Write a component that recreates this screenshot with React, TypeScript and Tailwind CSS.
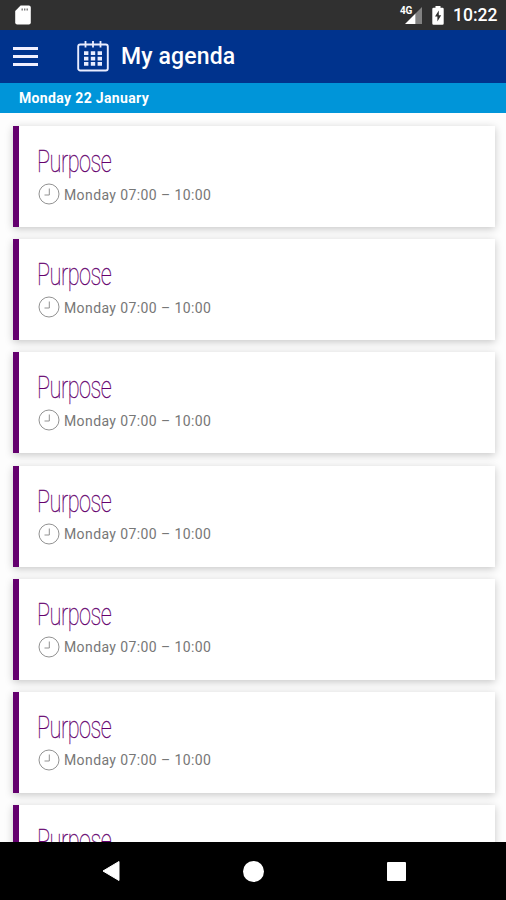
import React from 'react';

interface AgendaItem {
  id: number;
  title: string;
  time: string;
}

const agendaItems: AgendaItem[] = Array.from({ length: 7 }, (_, i) => ({
  id: i + 1,
  title: 'Purpose',
  time: 'Monday 07:00 – 10:00',
}));

const StatusBar = () => (
  <div className="flex h-[30px] shrink-0 items-center bg-[#303030] pl-[15px] pr-[9px] text-white">
    {/* SD card */}
    <svg width="16" height="20" viewBox="0 0 16 20" fill="currentColor">
      <path d="M5.6 0.5H13.8Q15.8 0.5 15.8 2.5V17.5Q15.8 19.5 13.8 19.5H2.2Q0.2 19.5 0.2 17.5V6Z" />
      <path d="M6.5 3.4h1.4v2.2H6.5zM9 3.4h1.4v2.2H9zM11.5 3.4h1.4v2.2h-1.4z" fill="#777" />
    </svg>
    <div className="ml-auto flex items-center">
      <div className="relative h-[20px] w-[22px]">
        <span className="absolute left-0 top-[1px] text-[10px] font-bold leading-[10px] tracking-[-0.3px]">4G</span>
        <svg className="absolute left-[5px] top-[2px]" width="17" height="17" viewBox="0 0 17 17">
          <path d="M17 0V17H10.5V6.5Z" fill="#828282" />
          <path d="M10.5 6.5V17H0Z" fill="#fff" />
        </svg>
      </div>
      <svg className="ml-[10px]" width="12" height="19" viewBox="0 0 12 19">
        <path d="M3.5 0h5v1.8h2Q11.7 1.8 11.7 3v14.5Q11.7 18.7 10.5 18.7h-9Q0.3 18.7 0.3 17.5V3Q0.3 1.8 1.5 1.8h2z" fill="#fff" />
        <path d="M6.8 4.5L3 10.5h2.4v5L9.2 9.300H6.8z" fill="#303030" />
      </svg>
      <span className="ml-[9px] w-[44px] whitespace-nowrap text-[17.5px] font-medium leading-[20px]">10:22</span>
    </div>
  </div>
);

const CalendarIcon = () => (
  <svg width="32" height="32" viewBox="0 0 32 32" fill="none" stroke="#e9edff">
    <rect x="1.2" y="3.5" width="29.6" height="26" rx="2" strokeWidth="1.9" />
    <path d="M8.5 0V6.5M16 0V6.5M23.5 0V6.5" strokeWidth="1.8" />
    <path d="M7 12.2H25M7 17.7H25M7 22.800H25" strokeWidth="3.8" strokeDasharray="4.400 2.400" />
  </svg>
);

const ClockIcon = () => (
  <svg width="22" height="22" viewBox="0 0 22 22" fill="none" stroke="#929292" strokeWidth="1">
    <circle cx="11" cy="11" r="10" />
    <path d="M11.300 5.500V12H6.500" />
  </svg>
);

const AgendaCard = ({ item }: { item: AgendaItem }) => (
  <div className="h-[101px] shrink-0 border-l-[6px] border-[#64006e] bg-white pl-[19px] pt-[17px] shadow-[0_2px_8px_rgba(0,0,0,0.22)]">
    <h2 className="-ml-[1.500px] h-[36px] w-max origin-left scale-x-[0.68] text-[32px] font-thin leading-[36px] tracking-[-0.8px] text-[#64006e] [-webkit-text-stroke:0.300px_#64006e]">
      {item.title}
    </h2>
    <div className="mt-[4px] flex h-[22px] items-center">
      <ClockIcon />
      <span className="ml-1 pt-px text-[14px] leading-[20px] tracking-[0.400px] text-[#777]">{item.time}</span>
    </div>
  </div>
);

export default function App() {
  return (
    <div className="flex h-[900px] w-[506px] flex-col overflow-hidden bg-[#fdfdfd] font-['Roboto',sans-serif]">
      <StatusBar />

      {/* Header */}
      <header className="flex h-[53px] shrink-0 items-center bg-[#00338d] pl-[13px] text-white">
        <div className="flex w-[25px] flex-col gap-[5px]">
          <span className="h-[3px] bg-[#f0f0ff]" />
          <span className="h-[3px] bg-[#f0f0ff]" />
          <span className="h-[3px] bg-[#f0f0ff]" />
        </div>
        <div className="ml-[39px]">
          <CalendarIcon />
        </div>
        <h1 className="ml-[12px] text-[23px] font-medium leading-[30px] tracking-[0.150px]">My agenda</h1>
      </header>
      <div className="h-[30px] shrink-0 bg-[#0095d9] pl-[19px] text-[14px] font-bold leading-[30px] tracking-[0.350px] text-white">
        Monday 22 January
      </div>

      {/* Agenda */}
      <main className="flex min-h-0 flex-1 flex-col gap-[12.200px] overflow-hidden pl-[13px] pr-[11px] pt-[13px]">
        {agendaItems.map(item => (
          <AgendaCard key={item.id} item={item} />
        ))}
      </main>

      {/* Navigation bar */}
      <nav className="flex h-[58px] shrink-0 items-center bg-black pl-[102px]">
        <svg width="18" height="22" viewBox="0 0 18 22" fill="#fff">
          <path d="M17 1.500V20.500L1 11Z" stroke="#fff" strokeLinejoin="round" />
        </svg>
        <span className="ml-[123px] h-[21px] w-[21px] rounded-full bg-white" />
        <span className="ml-[123px] h-[19px] w-[19px] rounded-[1px] bg-white" />
      </nav>
    </div>
  );
}
